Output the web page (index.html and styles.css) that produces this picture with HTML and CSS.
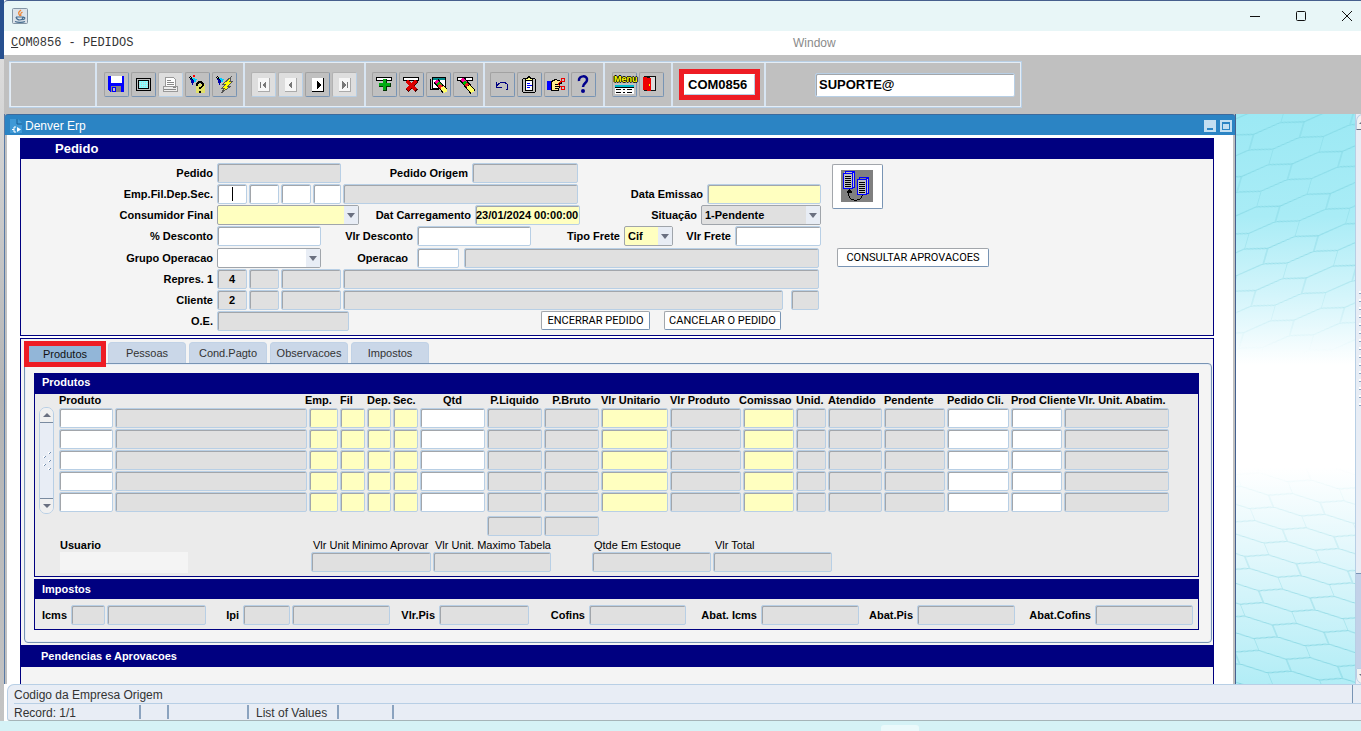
FILE: index.html
```html
<!DOCTYPE html>
<html lang="pt-BR">
<head>
<meta charset="utf-8">
<title>COM0856 - PEDIDOS</title>
<link rel="stylesheet" href="styles.css">
</head>
<body>
<div class="desktop">
<div class="edge"></div>
<div class="app">
  <header class="titlebar">
    <svg class="java" width="16" height="16" viewBox="0 0 16 16"><rect x=".5" y=".5" width="15" height="15" rx="1" fill="#dce3ea" stroke="#8395a5"/><path d="M9 2C6 4.500 6 5 8 8M10.500 4C8 5.500 8.500 6 9 8" fill="none" stroke="#ee8432" stroke-width="1.300"/><path d="M4 9h7c0 4-6 4-7 0M11 9.500c3-1 2 2.500-.8 2M3 13.500c3 1.300 8 1 10 0" fill="none" stroke="#486f91" stroke-width="1.200"/></svg>
    <nav class="winctl">
      <button aria-label="Minimizar"><svg width="12" height="12"><path d="M1 6.500h10" stroke="#111"/></svg></button>
      <button aria-label="Maximizar"><svg width="12" height="12"><rect x="1.500" y="1.500" width="9" height="9" rx="1" fill="none" stroke="#111"/></svg></button>
      <button aria-label="Fechar"><svg width="12" height="12"><path d="M1 1l10 10M11 1L1 11" stroke="#111"/></svg></button>
    </nav>
  </header>
  <nav class="menubar"><button class="menu-main"><u>C</u>OM0856 - PEDIDOS</button><button class="menu-window">Window</button></nav>

  <div class="toolbar"><div class="groups">
    <div class="group g-blank"></div>
    <div class="group g-file">
      <button class="tool" aria-label="Salvar"><svg width="20" height="20"><path d="M2 2h16v16H4l-2-2z" fill="#00f"/><path d="M5 2h11v7H5z" fill="#fff"/><path d="M5 12h10v6H5z" fill="#808080"/><path d="M6 13h4v5H6z" fill="#00f"/><path d="M7 14h2v3H7z" fill="#c0c0c0"/></svg></button>
      <button class="tool" aria-label="Tela"><svg width="20" height="20"><rect x="3.500" y="4.500" width="14" height="12" rx="1" fill="#c0c0c0" stroke="#000"/><rect x="5.500" y="6.500" width="10" height="8" fill="#8ff" stroke="#000"/><path d="M6 8.500h9M6 10.500h9M6 12.500h9" stroke="#c8c8c8" stroke-dasharray="1 1"/></svg></button>
      <button class="tool off" aria-label="Imprimir"><svg width="20" height="20"><path d="M5.500 3.500h8l2 2v7h-10z" fill="#fff" stroke="#999"/><path d="M7 6.500h4M7 8.500h7M7 10.500h7" stroke="#888"/><path d="M3.500 12.500h14v5h-14z" fill="#eee" stroke="#999"/><path d="M4 15.500h12M13 13.500h3" stroke="#888"/></svg></button>
      <button class="tool" aria-label="Consultar"><svg width="20" height="20"><path d="M9 10h9v9H9z" fill="#ee4" opacity=".7"/><path d="M2 3l5 4M3 2l6 6" stroke="#000"/><path d="M5 4l5 1-2 4z" fill="#0cf"/><path d="M3 5l4 1-1 6z" fill="#00a"/><path d="M10 12c0-5 6-5 6-1 0 2-3 2-3 4M13 17v2" fill="none" stroke="#000" stroke-width="2"/><path d="M6 1h2v2H6z" fill="#f00"/></svg></button>
      <button class="tool" aria-label="Executar consulta"><svg width="20" height="20"><path d="M2 3l5 4M3 2l6 6" stroke="#000"/><path d="M5 4l5 1-2 4z" fill="#0cf"/><path d="M3 5l4 1-1 6z" fill="#00a"/><path d="M17 3l-8 7h3l-4 4h3l-4 5 10-7h-3l5-5h-3z" fill="#ff0" stroke="#555"/></svg></button>
    </div>
    <div class="group g-nav">
      <button class="tool off" aria-label="Primeiro"><svg width="20" height="20"><path d="M5 4h12v14H5z" fill="#f6f6f6"/><path d="M5 17.500h11.500V4" fill="none" stroke="#aaa"/><path d="M7.500 8v6" stroke="#777"/><path d="M13 7v8l-4-4z" fill="#777"/></svg></button>
      <button class="tool off" aria-label="Anterior"><svg width="20" height="20"><path d="M5 4h12v14H5z" fill="#f6f6f6"/><path d="M5 17.500h11.500V4" fill="none" stroke="#aaa"/><path d="M12 7v8l-4-4z" fill="#777"/></svg></button>
      <button class="tool" aria-label="Proximo"><svg width="20" height="20"><path d="M5 4h12v14H5z" fill="#fff"/><path d="M5 17.500h11.500V4" fill="none" stroke="#000"/><path d="M10 7v8l4-4z"/></svg></button>
      <button class="tool off" aria-label="Ultimo"><svg width="20" height="20"><path d="M5 4h12v14H5z" fill="#f6f6f6"/><path d="M5 17.500h11.500V4" fill="none" stroke="#aaa"/><path d="M13.500 8v6" stroke="#777"/><path d="M8 7v8l4-4z" fill="#777"/></svg></button>
    </div>
    <div class="group g-record">
      <button class="tool" aria-label="Inserir"><svg width="20" height="20"><path d="M2.500 3.500h15v3h-15z" fill="#fff" stroke="#000"/><path d="M11 5v12M5 11h12" stroke="#030" stroke-width="4"/><path d="M10.500 5v11M5 10.500h11" stroke="#0a1" stroke-width="3"/></svg></button>
      <button class="tool" aria-label="Excluir"><svg width="20" height="20"><path d="M2.500 3.500h15v3h-15z" fill="#fff" stroke="#000"/><path d="M6 7l10 10M16 7L6 17" stroke="#400" stroke-width="4"/><path d="M6 7l9 9M15 7l-9 9" stroke="#d00" stroke-width="3"/></svg></button>
      <button class="tool" aria-label="Limpar tela"><svg width="20" height="20"><path d="M4.500 3.500h13v11h-13z" fill="#fff" stroke="#000"/><path d="M5 5h12" stroke="#088" stroke-width="2"/><path d="M2.500 5v10h8" fill="none" stroke="#000"/><path d="M8 7l9 10" stroke="#000" stroke-width="6"/><path d="M8 7l3 3" stroke="#f09" stroke-width="4"/><path d="M10 9l3 3" stroke="#0b0" stroke-width="4"/><path d="M11 11l3 3" stroke="#e22" stroke-width="4"/><path d="M14 13l4 5" stroke="#ff6" stroke-width="4"/></svg></button>
      <button class="tool" aria-label="Limpar registro"><svg width="20" height="20"><path d="M2.500 3.500h15v3h-15z" fill="#fff" stroke="#000"/><path d="M7 5l11 13" stroke="#000" stroke-width="6"/><path d="M7 5l4 4" stroke="#f09" stroke-width="4"/><path d="M9 8l3 3" stroke="#0b0" stroke-width="4"/><path d="M11 10l2 2" stroke="#e22" stroke-width="4"/><path d="M13 12l5 6" stroke="#ff6" stroke-width="4"/></svg></button>
    </div>
    <div class="group g-edit">
      <button class="tool" aria-label="Desfazer"><svg width="20" height="20"><path d="M4 13c4-7 12-5 12 0 0 2-1 3-2 3M4.500 8v5.500H10" fill="none" stroke="#000080"/></svg></button>
      <button class="tool" aria-label="Area de transferencia"><svg width="20" height="20"><rect x="3.500" y="4.500" width="13" height="14" rx="2" fill="#c0c0c0" stroke="#000"/><path d="M6.500 5.500h7v11h-7z" fill="#fff" stroke="#000"/><path d="M6.500 4.500h2l1-2h1l1 2h2v2h-7z" fill="#ff8" stroke="#000"/><path d="M8 9.500h3M8 11.500h5M8 13.500h3" stroke="#00f"/></svg></button>
      <button class="tool" aria-label="Recortar"><svg width="20" height="20"><path d="M1 7h4v9H1z" fill="#00f"/><path d="M5.500 7.500l4-2 6 2v2h-3l1 2-1 5h-7z" fill="#ffec8b" stroke="#000"/><path d="M9 10.500h4M9 12.500h4M9 14.500h3" stroke="#000"/><path d="M12 10l4-3M12 10l4 4" stroke="#e00"/><circle cx="17" cy="6" r="2" fill="none" stroke="#e00"/><circle cx="17" cy="14" r="2" fill="none" stroke="#e00"/></svg></button>
      <button class="tool" aria-label="Ajuda"><svg class="smooth" width="20" height="20"><path d="M6 7c-1-6 9-6 8-1 0 3-4 3-4 7" fill="none" stroke="#00008b" stroke-width="2.500"/><circle cx="10" cy="17" r="2" fill="#00008b"/></svg></button>
    </div>
    <div class="group g-menu">
      <button class="tool" aria-label="Menu"><span class="menu-word" aria-hidden="true">Menu</span><svg width="20" height="20"><path d="M1 12h19" stroke="#0bc" stroke-width="2"/><path d="M1 14h19v6H1z" fill="#fff"/><path d="M1 13.500h19" stroke="#000"/><path d="M2 15.500h17M2 18.500h17" stroke="#000" stroke-dasharray="5 2 2 2"/></svg></button>
      <button class="tool" aria-label="Sair"><svg width="20" height="20"><path d="M3 2h12v15H3z" fill="#111"/><path d="M9 3h5v13H9z" fill="#ddd"/><path d="M2 3l8 1v13l-8-1z" fill="#e00"/><path d="M8 10h1v2H8z" fill="#ff0"/></svg></button>
    </div>
    <div class="group g-code"><div class="mark"><input class="big" aria-label="Programa" value="COM0856"></div></div>
    <div class="group g-user"><input class="field big" aria-label="Usuario conectado" value="SUPORTE@"></div>
  </div></div>

  <div class="workspace">
    <main class="window">
      <div class="wtitle">
        <svg width="12" height="14" viewBox="0 0 12 14"><path d="M0 0h8l4 4v10H0z" fill="#3f99d6"/><path d="M7 0v5h5" fill="none" stroke="#1b5f95"/><path d="M6 8H4v5h2M2 10.500h2" fill="none" stroke="#fff"/><path d="M7 8l4 2.500L7 13z" fill="#fff"/></svg>
        <h1>Denver Erp</h1>
        <button aria-label="Minimizar janela"><i class="bar"></i></button><button aria-label="Restaurar janela"><i class="sq"></i></button>
      </div>
      <div class="wbody">
        <section class="panel order">
          <h2 class="band main-band">Pedido</h2>
          <div class="order-body">
            <form class="rows">
              <div class="row r1"><label for="pedido">Pedido</label><input id="pedido" class="field ro"><label for="origem">Pedido Origem</label><input id="origem" class="field ro"></div>
              <div class="row r2"><label for="emp">Emp.Fil.Dep.Sec.</label><input id="emp" class="field caret"><input class="field" aria-label="Filial"><input class="field" aria-label="Deposito"><input class="field" aria-label="Secao"><input class="field ro" aria-label="Descricao da empresa"><label for="emissao">Data Emissao</label><input id="emissao" class="field req"></div>
              <div class="row r3"><label for="consumidor">Consumidor Final</label><span class="combo"><select id="consumidor" class="req"><option></option></select></span><label for="carga">Dat Carregamento</label><input id="carga" class="field req tight" value="23/01/2024 00:00:00"><label for="situacao">Situação</label><span class="combo"><select id="situacao" class="ro"><option>1-Pendente</option></select></span></div>
              <div class="row r4"><label for="pdesc">% Desconto</label><input id="pdesc" class="field"><label for="vdesc">Vlr Desconto</label><input id="vdesc" class="field"><label for="frete">Tipo Frete</label><span class="combo"><select id="frete" class="req"><option>Cif</option></select></span><label for="vfrete">Vlr Frete</label><input id="vfrete" class="field"></div>
              <div class="row r5"><label for="grupo">Grupo Operacao</label><span class="combo"><select id="grupo"><option></option></select></span><label for="oper">Operacao</label><input id="oper" class="field"><input class="field ro" aria-label="Descricao da operacao"></div>
              <div class="row r6"><label for="repres">Repres. 1</label><input id="repres" class="field ro mid" value="4"><input class="field ro" aria-label="Repres filial"><input class="field ro" aria-label="Repres codigo"><input class="field ro" aria-label="Repres nome"></div>
              <div class="row r7"><label for="cliente">Cliente</label><input id="cliente" class="field ro mid" value="2"><input class="field ro" aria-label="Cliente filial"><input class="field ro" aria-label="Cliente codigo"><input class="field ro" aria-label="Cliente nome"><input class="field ro uf" aria-label="Cliente UF"></div>
              <div class="row r8"><label for="oe">O.E.</label><input id="oe" class="field ro"><button type="button" class="push close-order">ENCERRAR PEDIDO</button><button type="button" class="push cancel-order">CANCELAR O PEDIDO</button></div>
            </form>
            <div class="side">
              <button class="push picture" aria-label="Transferir"><svg width="32" height="32" shape-rendering="crispEdges"><rect width="32" height="32" fill="#808080"/><path d="M4 1h9v17H2V3z" fill="#c0c0c0"/><path d="M2.500 3.500h9v15h-9zM4 3V1.500h9.500V17H12M11.500 3l2-2" fill="none" stroke="#00f" stroke-width="1"/><path d="M4 6.500h6M4 8.500h6M4 10.500h6M4 12.500h6M4 14.500h6M4 16.500h6" stroke="#000"/><path d="M16 9h11v14h-2v2h-9z" fill="#c0c0c0"/><path d="M16.500 9.500h9v15h-9zM18 9V7.500h9.500V23H26M25.500 9l2-2" fill="none" stroke="#00f" stroke-width="1"/><path d="M18 12.500h6M18 14.500h6M18 16.500h6M18 18.500h6M18 20.500h6M18 22.500h6" stroke="#000"/><path d="M7.500 20v5c2 7 12 7 14 0" fill="none" stroke="#000"/><path d="M5 22l3-3 3 3-1 1H6z"/></svg></button>
              <button class="push approvals">CONSULTAR APROVACOES</button>
            </div>
          </div>
        </section>

        <section class="panel details">
          <div class="tabs" role="tablist">
            <button class="tab active" role="tab">Produtos</button><button class="tab" role="tab">Pessoas</button><button class="tab" role="tab">Cond.Pagto</button><button class="tab" role="tab">Observacoes</button><button class="tab" role="tab">Impostos</button>
          </div>
          <div class="sheet">
            <section class="panel sub">
              <h3 class="band">Produtos</h3>
              <div class="grid-area">
                <div class="scroller"><button class="up" aria-label="Subir"></button><span><svg width="8" height="20"><g fill="#fff"><path d="M0 5h2v2H0zM5 1h2v2H5zM5 9h2v2H5zM0 13h2v2H0zM5 17h2v2H5z"/></g><path d="M1 7l2-2M6 3l2-2M6 11l2-2M1 15l2-2M6 19l2-2" stroke="#7590b0"/></svg></span><button class="down" aria-label="Descer"></button></div>
                <table class="items">
                  <colgroup><col class="w56"><col class="w194"><col class="w31"><col class="w27"><col class="w26"><col class="w27"><col class="w67"><col class="w57"><col class="w57"><col class="w69"><col class="w73"><col class="w53"><col class="w32"><col class="w56"><col class="w63"><col class="w64"><col class="w53"><col class="w107"></colgroup>
                  <thead><tr><th>Produto</th><th></th><th class="lead">Emp.</th><th>Fil</th><th>Dep.</th><th>Sec.</th><th class="center">Qtd</th><th class="center">P.Liquido</th><th class="center">P.Bruto</th><th>Vlr Unitario</th><th>Vlr Produto</th><th class="lead">Comissao</th><th>Unid.</th><th>Atendido</th><th>Pendente</th><th>Pedido Cli.</th><th>Prod Cliente</th><th class="last">Vlr. Unit. Abatim.</th></tr></thead>
                  <tbody id="items"></tbody>
                  <tfoot><tr><td colspan="7"></td><td><input class="field ro" aria-label="Total P.Liquido"></td><td><input class="field ro" aria-label="Total P.Bruto"></td><td colspan="9"></td></tr></tfoot>
                </table>
              </div>
              <div class="totals">
                <div class="user"><label for="usuario">Usuario</label><input id="usuario" class="flat"></div>
                <div><label class="thin" for="minimo">Vlr Unit Minimo Aprovar</label><input id="minimo" class="field ro"></div>
                <div><label class="thin" for="maximo">Vlr Unit. Maximo Tabela</label><input id="maximo" class="field ro"></div>
                <div class="stock"><label class="thin" for="estoque">Qtde Em Estoque</label><input id="estoque" class="field ro"></div>
                <div><label class="thin" for="total">Vlr Total</label><input id="total" class="field ro"></div>
              </div>
            </section>
            <section class="panel sub">
              <h3 class="band tax-band">Impostos</h3>
              <div class="taxes">
                <label for="icms">Icms</label><input id="icms" class="field ro"><input class="field ro" aria-label="Valor Icms">
                <label for="ipi">Ipi</label><input id="ipi" class="field ro"><input class="field ro" aria-label="Valor Ipi">
                <label for="pis">Vlr.Pis</label><input id="pis" class="field ro">
                <label for="cofins">Cofins</label><input id="cofins" class="field ro">
                <label for="aicms">Abat. Icms</label><input id="aicms" class="field ro">
                <label for="apis">Abat.Pis</label><input id="apis" class="field ro">
                <label for="acofins">Abat.Cofins</label><input id="acofins" class="field ro">
              </div>
            </section>
          </div>
          <h2 class="band pend-band">Pendencias e Aprovacoes</h2>
        </section>
      </div>
    </main>
    <div class="wallpaper"><svg width="100%" height="100%" preserveAspectRatio="none">
      <defs>
        <pattern id="hexTop" width="52" height="38" patternUnits="userSpaceOnUse" patternTransform="rotate(-14) skewX(-30)"><path d="M0 5L26 0 52 5M0 5v14M0 19l26 5 26-5M26 24v14" fill="none" stroke="#6fcbd9"/></pattern>
        <pattern id="hexLow" width="52" height="32" patternUnits="userSpaceOnUse" patternTransform="rotate(8) skewX(30)"><path d="M0 5L26 0 52 5M0 5v11M0 16l26 5 26-5M26 21v11" fill="none" stroke="#6fcbd9"/></pattern>
        <linearGradient id="fadeTop" x2="0" y2="1"><stop offset="0" stop-color="#888"/><stop offset=".6" stop-color="#888"/><stop offset="1" stop-color="#000"/></linearGradient>
        <linearGradient id="fadeLow" x2="0" y2="1"><stop offset="0" stop-color="#000"/><stop offset=".6" stop-color="#999"/><stop offset="1" stop-color="#bbb"/></linearGradient>
        <mask id="maskTop"><rect width="100%" height="42%" fill="url(#fadeTop)"/></mask>
        <mask id="maskLow"><rect y="62%" width="100%" height="38%" fill="url(#fadeLow)"/></mask>
      </defs>
      <rect width="100%" height="42%" fill="url(#hexTop)" mask="url(#maskTop)"/>
      <rect y="62%" width="100%" height="38%" fill="url(#hexLow)" mask="url(#maskLow)"/>
    </svg></div>
    <div class="vscroll"><button class="up" aria-label="Rolar para cima"></button><span class="thumb"></span><span class="track"></span><button class="down" aria-label="Rolar para baixo"></button></div>
  </div>

  <footer class="status">
    <div class="hint"><span>Codigo da Empresa Origem</span></div>
    <div class="cells"><span class="c-record">Record: 1/1</span><span class="c-a"></span><span class="c-b"></span><span class="c-list">List of Values</span><span class="c-d"></span></div>
  </footer>
</div>
</div>
<div class="taskbar"><span></span></div>
<script src="app.js"></script>
</body>
</html>
```
FILE: styles.css
```css
* { box-sizing: border-box; }
body {
  margin: 0;
  height: 100vh;
  display: flex;
  flex-direction: column;
  overflow: hidden;
  font: 11px "Liberation Sans", sans-serif;
  color: #000;
}
button, input, select { font: inherit; color: inherit; margin: 0; padding: 0; border-radius: 0; }
h1, h2, h3 { margin: 0; font-size: inherit; }
svg { display: block; flex: none; }

.desktop { flex: 1; min-height: 0; display: flex; }
.edge { width: 4px; background: linear-gradient(#27508f 59px, #dcdcdc 59px, #d2d2d2 150px, #b4b4b4 400px, #c4c4c4); }
.app { flex: 1; min-width: 0; display: flex; flex-direction: column; background: #fff; }

.titlebar { height: 31px; display: flex; align-items: center; padding-left: 8px; background: #e8f6f7; border-top: 1px solid #465f8d; border-top-left-radius: 4px; }
.winctl { margin-left: auto; display: flex; margin-right: -9px; }
.winctl button { width: 46px; height: 30px; border: 0; background: none; display: grid; place-items: center; }

.menubar { height: 24px; display: flex; align-items: center; background: #fff; }
.menubar button { border: 0; background: none; }
.menubar .menu-main { width: 789px; padding-left: 7px; text-align: left; font: 12px "Liberation Mono", monospace; color: #333; }
.menubar .menu-window { font-size: 12px; color: #8a8a8a; }

.toolbar { height: 59px; padding: 6px 5px; display: flex; align-items: flex-start; background: #c0c0c0; }
.groups { display: flex; height: 47px; border: 1px solid #b8cfe5; border-left: 0; outline: 1px solid #e4edf6; outline-offset: -2px; }
.group { display: flex; align-items: center; gap: 2px; border-left: 2px solid #d8e5f2; padding-left: 6px; }
.g-blank { width: 86px; }
.g-file { width: 148px; padding-left: 7px; }
.g-nav { width: 121px; }
.g-record { width: 119px; }
.g-edit { width: 120px; padding-left: 5px; }
.g-menu { width: 68px; padding-left: 7px; }
.g-code { width: 93px; }
.g-user { width: 257px; padding-left: 49px; }
.tool { position: relative; width: 25px; height: 25px; border: 1px solid; border-color: #a2a2a2 #7894b4 #7894b4 #a2a2a2; border-radius: 2px; background: #c0c0c0; display: grid; place-content: start; padding: 1px; }
.tool svg { shape-rendering: crispEdges; }
.tool svg.smooth { shape-rendering: auto; }
.tool.off { background: #dedede; border-color: #b2b2b2 #b8cfe5 #b8cfe5 #b2b2b2; }
.menu-word { position: absolute; left: 1px; top: 1px; font: bold 9px/10px "Liberation Sans", sans-serif; color: #ff0; text-shadow: 1px 0 #000, -1px 0 #000, 0 1px #000, 0 -1px #000; z-index: 1; }
.mark { border: 5px solid #ee1c24; background: #fff; }
.mark .big { display: block; width: 71px; height: 21px; border: 1px solid #fff; border-right-color: #b8cfe5; border-bottom-color: #b8cfe5; padding-left: 3px; }
.big, .field.big { font-size: 13px; font-weight: bold; }
.g-user .field { width: 200px; height: 24px; padding-left: 3px; }

.workspace { flex: 1; min-height: 0; display: flex; overflow: hidden; }
.window { flex: 1; min-width: 0; overflow: hidden; background: #fff; border-left: 1px solid #5a7aa5; border-right: 1px solid #46618f; box-shadow: inset 2px 0 #c0c0c0, inset -2px 0 #c0c0c0; }
.wtitle { height: 21px; display: flex; align-items: center; padding: 1px 3px 0 5px; background: #2b84c4; border-top: 1px solid #3d6a9c; border-radius: 3px 3px 0 0; color: #fff; }
.wtitle h1 { flex: 1; padding-left: 3px; font-size: 12px; font-weight: normal; }
.wtitle button { width: 12px; height: 12px; margin-left: 4px; border: 0; background: #c3dff2; display: grid; place-items: center; }
.bar { width: 6px; height: 2px; margin-top: 6px; background: #2b84c4; }
.sq { width: 8px; height: 8px; border: 1px solid #2b84c4; border-top-width: 2px; }
.wbody { padding: 3px 21px 0 15px; display: flex; flex-direction: column; gap: 2px; }

.panel { border: 1px solid #000080; background: #f4f4f4; }
.band { height: 21px; line-height: 19px; padding-left: 8px; margin: -1px -1px 0; border: 0 solid #000080; background: #000080; color: #fff; font-size: 11px; font-weight: bold; }
.main-band { padding-left: 35px; line-height: 21px; font-size: 13px; }
.tax-band { height: 20px; line-height: 20px; }
.pend-band { height: 22px; margin-top: 2px; padding-left: 21px; line-height: 22px; }

label { font-weight: bold; text-align: right; white-space: nowrap; padding-right: 2px; line-height: 14px; }
.field { width: 100%; min-width: 0; height: 20px; display: block; border: 1px solid #b8cfe5; border-radius: 2px; background: #fff; box-shadow: inset 1px 1px #a2a6ab; font-weight: bold; padding: 0 2px; outline: 0; }
.ro, .field.ro { background-color: #e0e0e0; }
.req, .field.req { background-color: #ffffc0; }
.field.mid { text-align: center; }
.field.tight { padding: 0; }
.field.caret { background: linear-gradient(#000, #000) center / 1px 14px no-repeat #fff; }
.combo { position: relative; display: block; }
.combo select { display: block; width: 100%; height: 20px; padding-left: 3px; border: 1px solid #a0a5ab; border-radius: 2px; appearance: none; font-weight: bold; outline: 0; }
.combo select:not(.ro):not(.req) { background: #fff; }
.combo::before { content: ""; position: absolute; right: 1px; top: 1px; width: 14px; height: 18px; background: #e8edf5; pointer-events: none; }
.combo::after { content: ""; position: absolute; right: 4px; top: 8px; border: 4px solid transparent; border-top: 5px solid #6a7080; border-bottom: 0; pointer-events: none; }

.order-body { display: flex; padding: 4px 0; }
.rows { display: grid; align-content: space-between; min-height: 168px; grid-auto-rows: 20px; }
.row { display: grid; column-gap: 2px; align-items: center; }
.r1 { grid-template-columns: 194px 124px 127px 106px; }
.r2 { grid-template-columns: 194px 30px 30px 30px 28px 235px 125px 114px; }
.r3 { grid-template-columns: 194px 142px 112px 105px 117px 120px; }
.r4 { grid-template-columns: 194px 104px 92px 114px 89px 49px 58px 86px; }
.r5 { grid-template-columns: 194px 104px 92px 42px 358px; }
.r5 label:nth-of-type(2) { padding-right: 7px; }
.r5 .ro { width: 355px; justify-self: end; }
.r6 { grid-template-columns: 194px 30px 30px 60px 476px; }
.r7 { grid-template-columns: 194px 30px 30px 60px 440px 34px; }
.uf { width: 28px; justify-self: end; }
.r8 { grid-template-columns: 194px 132px 188px 109px 10px 117px; }
.close-order { grid-column: 4; }
.cancel-order { grid-column: 6; }
.push { height: 19px; border: 1px solid; border-color: #a2a6ab #7894b4 #7894b4 #a2a6ab; border-radius: 2px; background: #fff; font: 11px Roboto, sans-serif; white-space: nowrap; }
.side { padding: 1px 0 0 11px; display: flex; flex-direction: column; align-items: flex-start; gap: 39px; }
.picture { width: 51px; height: 45px; display: grid; place-content: start; padding: 5px 0 0 8px; }
.approvals { width: 152px; margin-left: 5px; }

.details { padding: 3px 0 40px; border-bottom: 0; }
.tabs { display: flex; align-items: flex-end; gap: 3px; padding-left: 3px; height: 21px; }
.tab { width: 78px; height: 21px; border: 1px solid #c1d2e6; border-bottom: 0; border-radius: 4px 4px 0 0; background: #cad7e8; color: #333; }
.tab.active { position: relative; width: 82px; height: 26px; align-self: flex-start; margin: -1px -1px 0 0; border: 5px solid #ee1c24; border-radius: 0; background: #92b6d8; color: #111; }
.sheet { margin: 0 1px 0 3px; padding: 9px 12px 12px 9px; border: 1px solid #7894b4; border-radius: 0 4px 4px 4px; box-shadow: inset 0 0 0 1px #e6edf6; display: flex; flex-direction: column; gap: 2px; }
.sub { background: #ebebeb; }
.grid-area { display: flex; }
.scroller { width: 15px; height: 107px; margin: 13px 5px 0 4px; border: 1px solid #b8cfe5; border-radius: 7px; background: #e8edf5; display: flex; flex-direction: column; justify-content: space-between; align-items: center; overflow: hidden; flex: none; }
.scroller button { width: 13px; height: 15px; border: 0; background: #f0f0f0; display: grid; place-items: center; }
.up::before { content: ""; border: 4px solid transparent; border-top: 0; border-bottom: 4px solid #6a7080; }
.down::before { content: ""; border: 4px solid transparent; border-bottom: 0; border-top: 4px solid #6a7080; }
.scroller .up { border-bottom: 1px solid #7a8ba0; }
.scroller .down { border-top: 1px solid #7a8ba0; }
.items { table-layout: fixed; width: 1112px; border-collapse: collapse; flex: none; }
.items th { height: 14px; line-height: 12px; padding: 0; text-align: left; vertical-align: top; white-space: nowrap; font-weight: bold; }
.items .center { text-align: center; padding-right: 2px; }
.items .lead { text-indent: -4px; }
.items .last { padding-left: 14px; }
.items td { height: 21px; padding: 0 2px 0 0; vertical-align: top; }
.items tfoot td { height: 24px; padding-top: 3px; }
.w26 { width: 26px; }
.w27 { width: 27px; }
.w31 { width: 31px; }
.w32 { width: 32px; }
.w53 { width: 53px; }
.w56 { width: 56px; }
.w57 { width: 57px; }
.w63 { width: 63px; }
.w64 { width: 64px; }
.w67 { width: 67px; }
.w69 { width: 69px; }
.w73 { width: 73px; }
.w107 { width: 107px; }
.w194 { width: 194px; }
.totals { display: grid; grid-template-columns: 249px 120px 118px 158px 119px; column-gap: 2px; padding: 1px 0 3px 25px; }
.totals label { display: block; text-align: left; padding-left: 2px; }
.totals .user label { padding-left: 0; }
.thin { font-weight: normal; }
.flat { width: 128px; height: 21px; border: 0; background: #f4f4f4; }
.stock { padding-left: 39px; }
.taxes { display: grid; grid-template-columns: 34px 34px 99px 33px 47px 98px 45px 90px 56px 97px 71px 98px 54px 98px 76px 98px; column-gap: 2px; align-items: center; padding: 6px 0 4px; }

.wallpaper { width: 119px; flex: none; overflow: hidden; background: linear-gradient(#9ce9f4, #a9ecf6 18%, #d4f5fb 32%, #fff 44%, #fff 62%, #dcf6fb 80%, #b2edf6); }
.vscroll { width: 6px; flex: none; overflow: hidden; display: flex; flex-direction: column; background: #e8edf5; border-left: 1px solid #b8cfe5; }
.vscroll button { width: 14px; height: 16px; border: 1px solid #b8cfe5; border-radius: 7px 7px 0 0; background: #f2f2f2; }
.vscroll .down { border-radius: 0 0 7px 7px; display: grid; place-items: center; }
.vscroll .up { border-bottom-color: #6a7080; display: grid; place-items: center; }
.vscroll .thumb { flex: 445; background: repeating-linear-gradient(#fff 0 2px, #8ca5c2 2px 3px, transparent 3px 8px) 3px 50% / 3px 120px no-repeat; }
.vscroll .track { flex: 95; background: #c2d1e8; border-top: 1px solid #7894b4; }

.status { height: 37px; margin-left: 3px; background: #e8edf5; border: 1px solid #b8cfe5; border-right: 0; border-bottom: 1px solid #a5b4b8; border-radius: 7px 0 0 3px; font-size: 12px; color: #333; }
.hint { height: 19px; line-height: 20px; margin-left: 6px; border-bottom: 1px solid #b8cfe5; display: flex; padding-right: 8px; }
.hint span { flex: 1; border-right: 1px solid #7894b4; }
.cells { display: flex; padding: 1px 0 0 6px; line-height: 16px; }
.cells span { height: 14px; border-right: 2px solid #8ba3bf; }
.c-record { width: 127px; }
.c-a { width: 28px; }
.c-b { width: 80px; }
.c-list { width: 90px; padding-left: 7px; }
.c-d { width: 55px; }
.taskbar { height: 10px; background: #d5f2f6; padding: 4px 0 0 881px; flex: none; overflow: hidden; }
.taskbar span { display: block; width: 38px; height: 10px; border-radius: 3px; background: #eaf9fb; }
```
FILE: app.js
```js
const columns = [
  ["Produto", ""], ["Descricao", "ro"], ["Emp.", "req"], ["Fil", "req"], ["Dep.", "req"], ["Sec.", "req"],
  ["Qtd", ""], ["P.Liquido", "ro"], ["P.Bruto", "ro"], ["Vlr Unitario", "req"], ["Vlr Produto", "ro"],
  ["Comissao", "req"], ["Unid.", "ro"], ["Atendido", "ro"], ["Pendente", "ro"], ["Pedido Cli.", ""],
  ["Prod Cliente", ""], ["Vlr. Unit. Abatim.", "ro"]
];
const body = document.getElementById("items");
for (let line = 1; line <= 5; line++) {
  const row = body.insertRow();
  for (const [name, kind] of columns) {
    const input = document.createElement("input");
    input.className = ("field " + kind).trim();
    input.setAttribute("aria-label", name + " " + line);
    row.insertCell().append(input);
  }
}
```
